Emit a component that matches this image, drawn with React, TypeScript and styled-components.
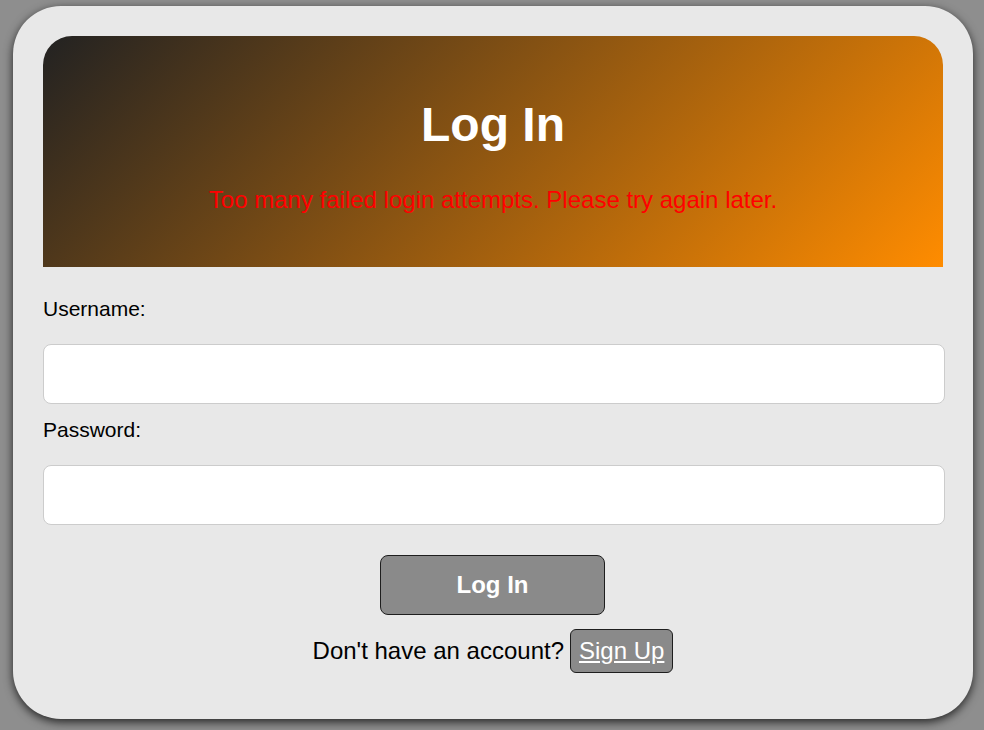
import React, {useState} from 'react';
import styled, {createGlobalStyle} from 'styled-components';

const GlobalStyle = createGlobalStyle`
  html, body {
    margin: 0;
    padding: 0;
    background-color: #8e8e8e;
    font-family: "Liberation Sans", Arial, sans-serif;
  }
`;

const LoginPage: React.FC = () => {
  const [username, setUsername] = useState('');
  const [password, setPassword] = useState('');
  const error = 'Too many failed login attempts. Please try again later.';

  return (
      <Page>
        <GlobalStyle/>
        <Card>
          <Header>
            <Title>Log In</Title>
            <ErrorText>{error}</ErrorText>
          </Header>
          <Form onSubmit={e => e.preventDefault()}>
            <Label htmlFor="username">Username:</Label>
            <Input
                id="username"
                type="text"
                value={username}
                onChange={e => setUsername(e.target.value)}
            />
            <Label htmlFor="password">Password:</Label>
            <Input
                id="password"
                type="password"
                value={password}
                onChange={e => setPassword(e.target.value)}
            />
            <SubmitButton type="submit">Log In</SubmitButton>
          </Form>
          <SignUpRow>
            Don't have an account?
            <SignUpButton type="button">Sign Up</SignUpButton>
          </SignUpRow>
        </Card>
      </Page>
  );
};

const Page = styled.div`
  min-height: 100vh;
  box-sizing: border-box;
  padding: 6px 11px 0 13px;
`;

const Card = styled.div`
  width: 960px;
  box-sizing: border-box;
  padding: 30px 30px 46px;
  background-color: #e8e8e8;
  border-radius: 48px;
  box-shadow: 0 3px 10px rgba(0, 0, 0, 0.75);
`;

const Header = styled.div`
  padding: 30px;
  text-align: center;
  border-radius: 29px 29px 0 0;
  background: linear-gradient(135deg, #222222, #ff8c00);
`;

const Title = styled.h1`
  margin: 31px 0 34px;
  font-size: 48px;
  font-weight: bold;
  color: white;
`;

const ErrorText = styled.p`
  margin: 0 0 23px;
  font-size: 24px;
  color: red;
`;

const Form = styled.form`
  display: flex;
  flex-direction: column;
  align-items: flex-start;
  margin-top: 30px;
`;

const Label = styled.label`
  font-size: 21px;
  color: black;
  margin-bottom: 23px;
`;

const Input = styled.input`
  box-sizing: content-box;
  width: 100%;
  height: 58px;
  padding: 0;
  margin: 0 0 14px;
  border: 1px solid #cccccc;
  border-radius: 8px;
  background: white;
  font-size: 20px;

  &:last-of-type {
    margin-bottom: 0;
  }
`;

const SubmitButton = styled.button`
  align-self: center;
  width: 225px;
  height: 60px;
  margin-top: 30px;
  margin-right: 1px;
  border: 1px solid #1e1e1e;
  border-radius: 8px;
  background-color: #8a8a8a;
  color: white;
  font-family: inherit;
  font-size: 24px;
  font-weight: bold;
  cursor: pointer;
`;

const SignUpRow = styled.div`
  display: flex;
  justify-content: center;
  align-items: center;
  gap: 6px;
  margin-top: 14px;
  font-size: 24px;
  color: black;
`;

const SignUpButton = styled.button`
  padding: 7px 8px;
  border: 1px solid #1e1e1e;
  border-radius: 6px;
  background-color: #8a8a8a;
  color: white;
  font-family: inherit;
  font-size: 24px;
  text-decoration: underline;
  cursor: pointer;
`;

export default LoginPage;
